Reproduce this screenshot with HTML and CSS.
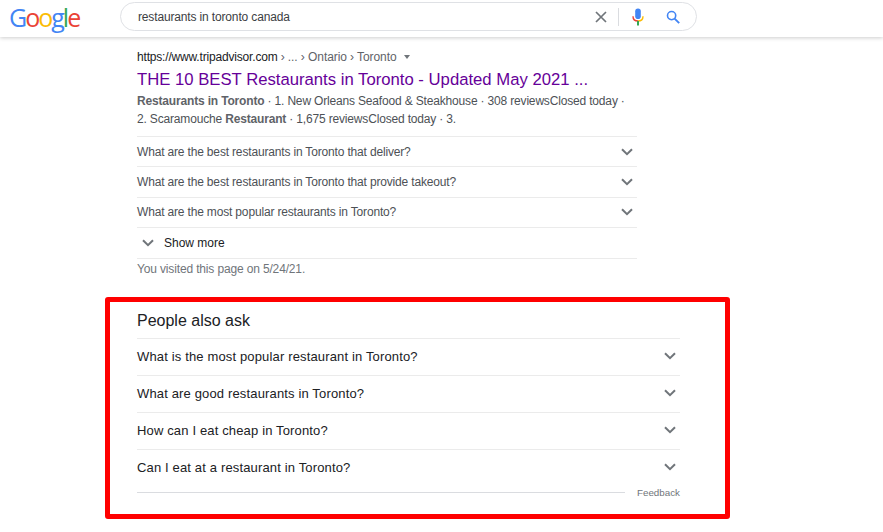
FILE: index.html
```html
<!DOCTYPE html>
<html lang="en">
<head>
    <meta charset="UTF-8">
    <meta name="viewport" content="width=device-width, initial-scale=1.0">
    <title>restaurants in toronto canada - Google Search</title>
    <link rel="stylesheet" href="styles.css">
</head>
<body>

    <header class="topbar">
        <div class="logo"><span class="blue">G</span><span class="red">o</span><span class="yellow">o</span><span class="blue">g</span><span class="green">l</span><span class="red">e</span></div>
        <div class="searchbox">
            <span class="query">restaurants in toronto canada</span>
            <svg class="clear-icon" width="14" height="14" viewBox="0 0 14 14"><path d="M2 2l10 10M12 2L2 12" stroke="#70757a" stroke-width="1.7" fill="none"/></svg>
            <span class="divider"></span>
            <svg class="mic-icon" width="12" height="18" viewBox="0 0 12 18">
                <rect x="3.2" y="0.5" width="5.6" height="10.5" rx="2.8" fill="#4285f4"/>
                <path d="M1 8.2c0 3 2.2 4.8 5 4.8" stroke="#ea4335" stroke-width="1.4" fill="none"/>
                <path d="M11 8.2c0 3-2.2 4.8-5 4.8" stroke="#fbbc05" stroke-width="1.4" fill="none"/>
                <rect x="5" y="13" width="2" height="4.5" fill="#34a853"/>
            </svg>
            <svg class="search-icon" width="14" height="14" viewBox="0 0 14 14"><circle cx="5.6" cy="5.6" r="4.1" stroke="#4285f4" stroke-width="1.6" fill="none"/><path d="M8.6 8.6l4.6 4.6" stroke="#4285f4" stroke-width="1.9" fill="none"/></svg>
        </div>
    </header>

    <main class="results">
        <div class="result">
            <div class="cite">https://www.tripadvisor.com <span class="crumbs">› ... › Ontario › Toronto</span><span class="caret"></span></div>
            <a class="title" href="#">THE 10 BEST Restaurants in Toronto - Updated May 2021 ...</a>
            <p class="snippet"><b>Restaurants in Toronto</b> · 1. New Orleans Seafood &amp; Steakhouse · 308 reviewsClosed today ·<br>2. Scaramouche <b>Restaurant</b> · 1,675 reviewsClosed today · 3.</p>

            <div class="faq-row">What are the best restaurants in Toronto that deliver?<svg class="chev" width="12" height="8" viewBox="0 0 12 8"><path d="M1 1.2l5 5 5-5" stroke="#70757a" stroke-width="2" fill="none"/></svg></div>
            <div class="faq-row">What are the best restaurants in Toronto that provide takeout?<svg class="chev" width="12" height="8" viewBox="0 0 12 8"><path d="M1 1.2l5 5 5-5" stroke="#70757a" stroke-width="2" fill="none"/></svg></div>
            <div class="faq-row">What are the most popular restaurants in Toronto?<svg class="chev" width="12" height="8" viewBox="0 0 12 8"><path d="M1 1.2l5 5 5-5" stroke="#70757a" stroke-width="2" fill="none"/></svg></div>
            <div class="show-more"><svg width="12" height="8" viewBox="0 0 12 8"><path d="M1 1.2l5 5 5-5" stroke="#70757a" stroke-width="2" fill="none"/></svg>Show more</div>
            <div class="visited">You visited this page on 5/24/21.</div>
        </div>

        <section class="paa">
            <h2>People also ask</h2>
            <div class="paa-row">What is the most popular restaurant in Toronto?<svg class="chev" width="12" height="8" viewBox="0 0 12 8"><path d="M1 1.2l5 5 5-5" stroke="#70757a" stroke-width="2" fill="none"/></svg></div>
            <div class="paa-row">What are good restaurants in Toronto?<svg class="chev" width="12" height="8" viewBox="0 0 12 8"><path d="M1 1.2l5 5 5-5" stroke="#70757a" stroke-width="2" fill="none"/></svg></div>
            <div class="paa-row">How can I eat cheap in Toronto?<svg class="chev" width="12" height="8" viewBox="0 0 12 8"><path d="M1 1.2l5 5 5-5" stroke="#70757a" stroke-width="2" fill="none"/></svg></div>
            <div class="paa-row">Can I eat at a restaurant in Toronto?<svg class="chev" width="12" height="8" viewBox="0 0 12 8"><path d="M1 1.2l5 5 5-5" stroke="#70757a" stroke-width="2" fill="none"/></svg></div>
            <div class="feedback"><span class="feedback-line"></span><span>Feedback</span></div>
        </section>
    </main>

</body>
</html>
```

FILE: styles.css
```css
html, body {
    height: 100%;
}
body {
    margin: 0;
    background-color: #fff;
    font-family: "Liberation Sans", Arial, sans-serif;
    color: #202124;
    overflow: hidden;
}

/* Top bar */
.topbar {
    display: flex;
    align-items: flex-start;
    height: 37px;
    padding-left: 9px;
    box-shadow: 0 1px 4px rgba(0,0,0,0.2);
}
.logo {
    width: 111px;
    font-family: "Open Sans", sans-serif;
    font-size: 25px;
    font-weight: 500;
    line-height: 35px;
    letter-spacing: -2px;
}
.blue { color: #4285f4; }
.red { color: #ea4335; }
.yellow { color: #fbbc05; }
.green { color: #34a853; }

.searchbox {
    display: flex;
    align-items: center;
    box-sizing: border-box;
    width: 577px;
    height: 29px;
    margin-top: 2px;
    padding-left: 17px;
    border: 1px solid #dfe1e5;
    border-radius: 15px;
    font-size: 12px;
}
.query {
    flex: 1;
    letter-spacing: -0.15px;
    color: #3c4043;
}
.clear-icon {
    margin-right: 10px;
}
.divider {
    width: 1px;
    height: 18px;
    margin-right: 13px;
    background-color: #dadce0;
}
.mic-icon {
    margin-right: 22px;
}
.search-icon {
    margin-right: 16px;
}

/* Result */
.results {
    padding-left: 105px;
}
.result {
    width: 500px;
    margin-left: 32px;
    padding-top: 13px;
}
.cite {
    font-size: 12px;
    line-height: 14px;
    letter-spacing: -0.18px;
    color: #202124;
}
.crumbs {
    letter-spacing: -0.08px;
    color: #5f6368;
}
.caret {
    display: inline-block;
    margin-left: 7px;
    vertical-align: 2px;
    border-left: 3px solid transparent;
    border-right: 3px solid transparent;
    border-top: 4px solid #70757a;
}
.title {
    display: block;
    margin-top: 4px;
    font-size: 16.7px;
    line-height: 24px;
    color: #609;
    text-decoration: none;
}
.snippet {
    margin: 0 0 8px;
    font-size: 12px;
    line-height: 18px;
    letter-spacing: -0.17px;
    color: #4d5156;
}
.snippet b {
    color: #5f6368;
}
.faq-row {
    display: flex;
    align-items: center;
    justify-content: space-between;
    box-sizing: border-box;
    height: 30.4px;
    padding-right: 4px;
    border-top: 1px solid #ebebeb;
    font-size: 12px;
    letter-spacing: -0.167px;
    color: #4d5156;
}
.show-more {
    display: flex;
    align-items: center;
    gap: 10px;
    box-sizing: border-box;
    height: 32px;
    padding: 0 0 1px 5px;
    border-top: 1px solid #ebebeb;
    border-bottom: 1px solid #ebebeb;
    font-size: 12px;
    color: #202124;
}
.visited {
    margin-top: 2px;
    font-size: 12px;
    line-height: 16px;
    letter-spacing: -0.15px;
    color: #70757a;
}

/* People also ask, boxed in red */
.paa {
    box-sizing: border-box;
    width: 625px;
    height: 222px;
    margin-top: 20px;
    padding: 9px 45px 0 27px;
    border: 5px solid #f00;
    border-radius: 3px;
}
.paa h2 {
    margin: 0;
    height: 27px;
    font-size: 16px;
    font-weight: 400;
    line-height: 20px;
    color: #202124;
}
.paa-row {
    display: flex;
    align-items: center;
    justify-content: space-between;
    box-sizing: border-box;
    height: 37px;
    padding: 0 4px 2px 0;
    border-top: 1px solid #ebebeb;
    font-size: 13px;
    letter-spacing: 0.15px;
    color: #202124;
}
.feedback {
    display: flex;
    align-items: center;
    gap: 12px;
    margin-top: 1px;
    font-size: 9.8px;
    color: #70757a;
}
.feedback-line {
    flex: 1;
    height: 1px;
    background-color: #dadce0;
}
```
